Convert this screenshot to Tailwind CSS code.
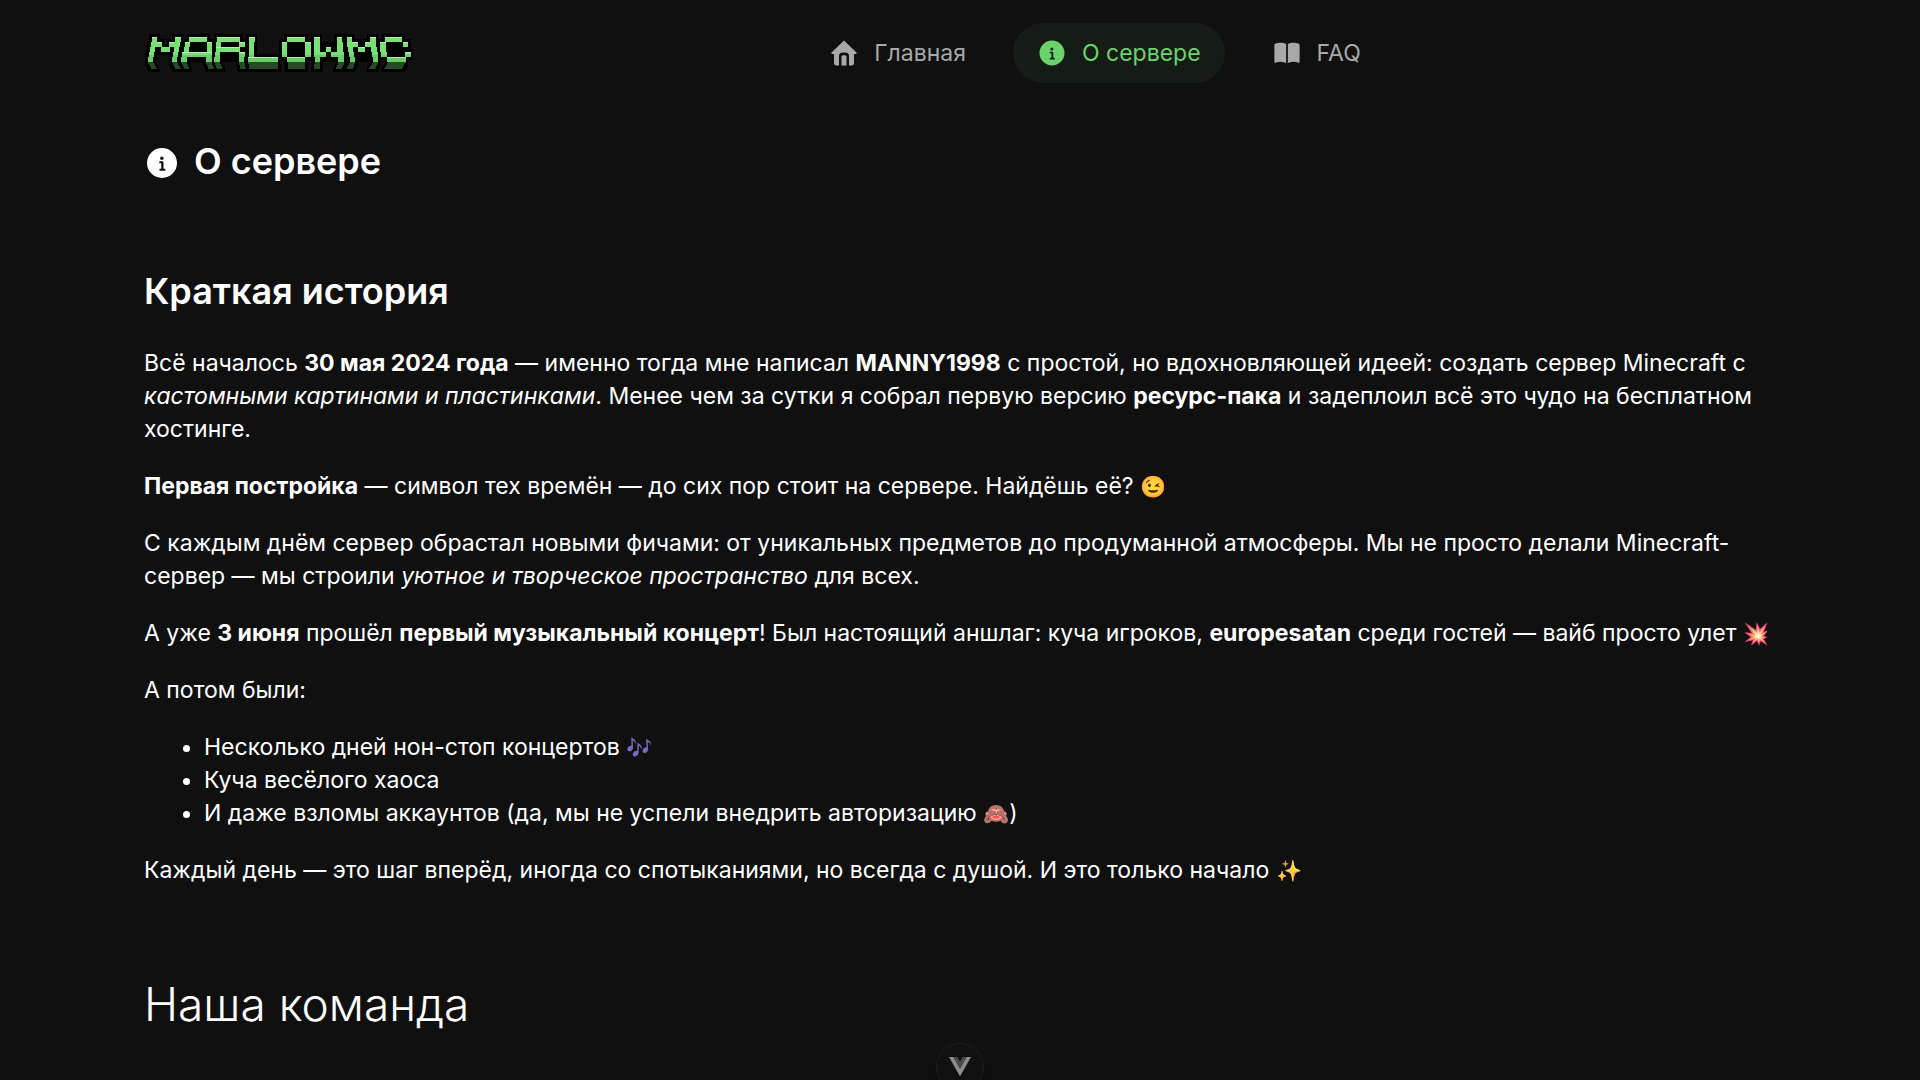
<!DOCTYPE html>
<html lang="ru">
<head>
<meta charset="utf-8">
<meta name="viewport" content="width=device-width, initial-scale=1">
<title>MarlowMC — О сервере</title>
<script src="https://cdn.jsdelivr.net/npm/@tailwindcss/browser@4"></script>
</head>
<body class="min-h-screen overflow-hidden bg-[#101010] px-36 font-['Inter',sans-serif] text-[23px] leading-[33px] text-white">
<svg class="hidden">
  <symbol id="info" viewBox="0 0 24 24"><path fill="currentColor" fill-rule="evenodd" d="M12 2a10 10 0 1 1 0 20 10 10 0 0 1 0-20Zm-.1 5.6a1.2 1.2 0 1 0 0 2.4 1.2 1.2 0 0 0 0-2.4ZM10.2 10.900v1.300h1.300v3.600h-1.200v1.300h3.900v-1.300H13v-4.200a.7.7 0 0 0-.7-.7Z"/></symbol>
</svg>

<header class="flex items-center pt-[23px]">
  <a href="#" aria-label="MarlowMC" class="shrink-0">
    <svg id="logo" class="h-[46px] w-[270px]" viewBox="0 0 810 138" shape-rendering="crispEdges"></svg>
  </a>
  <nav class="flex flex-1 justify-center gap-[23px] text-[#a8a8a8]">
    <a href="#" class="flex h-15 items-center gap-[15px] rounded-full px-6">
      <svg class="size-[30px]" viewBox="0 0 24 24" fill="currentColor"><path d="M12 2 2 11.500c-.4.500-.1 1.200.6 1.200H4V20a2 2 0 0 0 2 2h2v-7.500a3 3 0 0 1 3-3h2a3 3 0 0 1 3 3V22h2a2 2 0 0 0 2-2v-7.300h1.400c.7 0 1-.7.6-1.200Z"/><path d="M10 22v-7a1.200 1.200 0 0 1 1.200-1.200h1.600A1.200 1.200 0 0 1 14 15v7Z"/></svg>
      Главная
    </a>
    <a href="#" aria-current="page" class="flex h-15 items-center gap-[15px] rounded-full bg-[#151c15] px-6 text-[#6bd36b]">
      <svg class="size-[30px]"><use href="#info"/></svg>
      О сервере
    </a>
    <a href="#" class="flex h-15 items-center gap-[15px] rounded-full px-6">
      <svg class="size-[30px]" viewBox="0 0 24 24" fill="currentColor"><path d="M11.300 4.700C9 3.500 5 3.500 2.500 4.500a1 1 0 0 0-.6 1V19c0 .6.400.9 1 .7 2.500-.9 5.400-.9 7.600.1.400.2.800 0 .8-.5ZM12.700 4.700c2.300-1.200 6.300-1.200 8.800-.2a1 1 0 0 1 .6 1V19c0 .6-.4.9-1 .7-2.500-.9-5.400-.9-7.600.1-.4.2-.8 0-.8-.5Z"/></svg>
      FAQ
    </a>
  </nav>
</header>

<main>
  <h1 class="mt-14 flex items-start gap-[14px] text-[36px] leading-11 font-semibold">
    <svg class="mt-[6px] size-9"><use href="#info"/></svg>
    О сервере
  </h1>

  <section class="mt-[86px]">
    <h2 class="text-[36px] leading-11 font-semibold">Краткая история</h2>
    <div class="mt-[34px] space-y-6">
      <p>Всё началось <strong>30 мая 2024 года</strong> — именно тогда мне написал <strong>MANNY1998</strong> с простой, но вдохновляющей идеей: создать сервер Minecraft с <em>кастомными картинами и пластинками</em>. Менее чем за сутки я собрал первую версию <strong>ресурс-пака</strong> и задеплоил всё это чудо на бесплатном хостинге.</p>
      <p><strong>Первая постройка</strong> — символ тех времён — до сих пор стоит на сервере. Найдёшь её? <span class="inline-block text-[21px] leading-6 hue-rotate-[-12deg]">😉</span></p>
      <p>С каждым днём сервер обрастал новыми фичами: от уникальных предметов до продуманной атмосферы. Мы не просто делали Minecraft-сервер — мы строили <em>уютное и творческое пространство</em> для всех.</p>
      <p>А уже <strong>3 июня</strong> прошёл <strong>первый музыкальный концерт</strong>! Был настоящий аншлаг: куча игроков, <strong>europesatan</strong> среди гостей — вайб просто улет <span class="inline-block text-[21px] leading-6 hue-rotate-[-40deg]">💥</span></p>
      <p>А потом были:</p>
      <ul class="list-disc pl-15">
        <li>Несколько дней нон-стоп концертов <span class="inline-block text-[21px] leading-6 brightness-110 hue-rotate-[50deg] saturate-[2.5]">🎶</span></li>
        <li>Куча весёлого хаоса</li>
        <li>И даже взломы аккаунтов (да, мы не успели внедрить авторизацию <span class="inline-block text-[21px] leading-6 brightness-90 hue-rotate-[-30deg]">🙈</span>)</li>
      </ul>
      <p>Каждый день — это шаг вперёд, иногда со спотыканиями, но всегда с душой. И это только начало <span class="inline-block text-[21px] leading-6 hue-rotate-[-15deg]">✨</span></p>
    </div>
  </section>

  <section class="mt-[87px]">
    <h2 class="text-[46px] leading-15 font-light">Наша команда</h2>
  </section>
</main>

<button aria-label="Vue DevTools" class="fixed -bottom-[11px] left-1/2 flex size-12 -translate-x-1/2 items-center justify-center rounded-full border border-[#1e1e1e] bg-[#111111] shadow-lg">
  <svg class="size-[22px]" viewBox="0 0 22 20"><path fill="#8b8b8b" d="M0 0h4.500L11 11.500 17.500 0H22L11 19.500Z"/><path fill="#4b4b4b" d="M4.500 0h4L11 4.500 13.500 0h4L11 11.500Z"/></svg>
</button>

<script>
  // Pixel logo: each block is [x1, x2, row, rows, top edge lit]; five rows of 15 units, leaning towards the centre.
  const blocks = [
    [24,40,0,1,1],[93,110,0,1,1],[21,54,1,1,0],[76,107,1,1,0],[40,54,1,1,1],[76,93,1,1,1],[18,34,2,1,0],[51,78,2,1,0],[90,105,2,1,0],[15,31,3,1,0],[87,103,3,1,0],[11,28,4,1,0],[84,100,4,1,0],
    [136,190,0,1,1],[122,138,1,1,1],[188,205,1,1,1],[119,135,2,1,0],[188,204,2,1,0],[115,204,3,1,1],[112,128,4,1,0],[186,203,4,1,0],
    [218,288,0,1,1],[216,232,1,1,0],[286,303,1,1,1],[215,288,2,1,1],[213,229,3,1,0],[285,302,3,1,1],[211,228,4,1,0],[284,301,4,1,0],
    [315,332,0,1,1],[314,331,1,3,0],[313,401,4,1,1],
    [429,483,0,1,1],[413,429,1,3,1],[484,500,1,3,1],[429,483,4,1,1],
    [510,527,0,1,1],[578,595,0,1,1],[510,527,1,2,0],[580,597,1,2,0],[545,562,2,1,1],[511,545,3,1,0],[562,599,3,1,0],[512,529,4,1,0],[583,601,4,1,0],
    [608,625,0,1,1],[678,695,0,1,1],[609,643,1,1,0],[664,697,1,1,0],[625,643,1,1,1],[664,680,1,1,1],[611,628,2,1,0],[643,664,2,1,1],[682,699,2,1,0],[614,631,3,1,0],[684,701,3,1,0],[617,634,4,1,0],[686,703,4,1,0],
    [723,774,0,1,1],[708,725,1,1,1],[776,793,1,1,1],[709,726,2,1,0],[711,728,3,1,0],[783,800,3,1,1],[730,785,4,1,1]];
  // Sides below the letters: [x1, x2, shift at the bottom]
  const sides = [[11,28,11],[84,100,10],[112,128,8],[186,203,7],[211,228,7],[284,301,5],[313,401,2],[431,483,0],[512,529,-2],[583,601,-7],[617,634,-8],[686,703,-10],[732,785,-11]];
  const row = [20, 36, 51, 66, 81, 96];
  const rect = (x, y, w, h, fill) => `<rect x="${x}" y="${y}" width="${w}" height="${h}" fill="${fill}"/>`;
  let shade = '', side = '', face = '';
  for (const [a, b, r, n, lit] of blocks) {
    const y = row[r], h = row[r + n] - y;
    shade += rect(a - 8, y - 8, b - a + 16, h + 16, '#000');
    face += rect(a, y, b - a, h, '#78e074');
    if (y + h > 74) face += rect(a, Math.max(y, 74), b - a, y + h - Math.max(y, 74), '#68cd68');
    if (lit) face += rect(a, y, b - a, 4, '#b5eeb0');
  }
  for (const [a, b, s] of sides) for (let i = 0; i < 7; i++) {
    const x = a + s * i / 6, y = 96 + i * 3;
    shade += rect(x - 8, y, b - a + 16, 12, '#000');
    side += rect(x, y, b - a, 3, '#264a27');
  }
  for (const [x, w] of [[135,55],[230,56],[429,56],[527,56],[628,56],[725,60]]) shade += rect(x, 36, w, 60, '#000');
  document.getElementById('logo').innerHTML = shade + side + face;
</script>
</body>
</html>
